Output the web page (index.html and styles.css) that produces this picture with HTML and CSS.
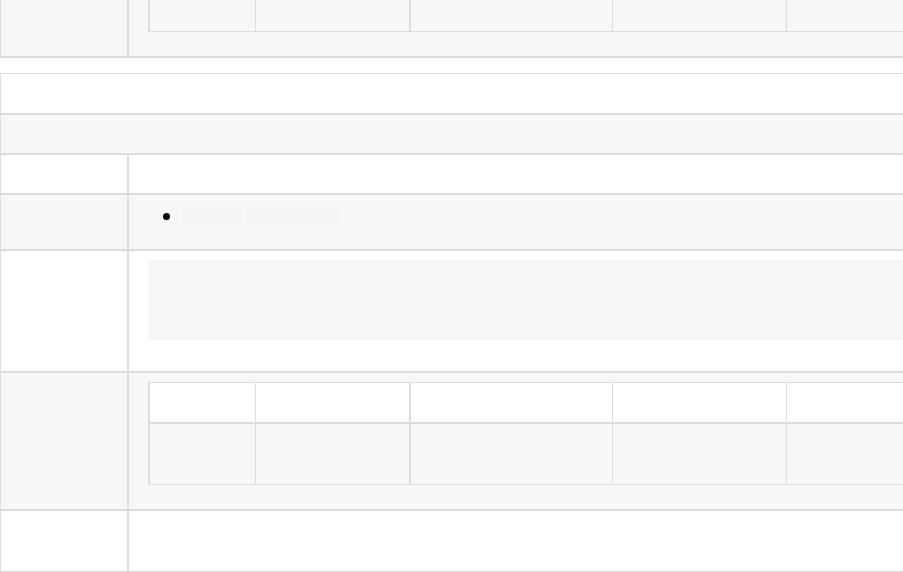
FILE: index.html
```html
<!DOCTYPE html>
<html lang="en">
<head>
<meta charset="utf-8">
<title>Table</title>
<link rel="stylesheet" href="styles.css">
</head>
<body>
<div class="page">
  <div class="tbl tbl-top">
    <div class="cell key last-row alt"></div>
    <div class="cell val last-row alt nested">
      <div class="inner">
        <div class="icell ic1 tail"></div>
        <div class="icell ic2 tail"></div>
        <div class="icell ic3 tail"></div>
        <div class="icell ic4 tail"></div>
        <div class="icell ic5 tail"></div>
      </div>
    </div>
  </div>

  <div class="tbl tbl-main">
    <div class="cell span r1"></div>
    <div class="cell span r2 alt"></div>

    <div class="cell key r3"></div>
    <div class="cell val r3"></div>

    <div class="cell key r4 alt"></div>
    <div class="cell val r4 alt">
      <ul class="list">
        <li class="item"><span class="bullet"></span><code class="code c-a"></code><code class="code c-b"></code></li>
      </ul>
    </div>

    <div class="cell key r5"></div>
    <div class="cell val r5 nested">
      <pre class="block"></pre>
    </div>

    <div class="cell key r6 alt"></div>
    <div class="cell val r6 alt nested">
      <div class="inner">
        <div class="icell ic1 head"></div>
        <div class="icell ic2 head"></div>
        <div class="icell ic3 head"></div>
        <div class="icell ic4 head"></div>
        <div class="icell ic5 head"></div>
        <div class="icell ic1 body"></div>
        <div class="icell ic2 body"></div>
        <div class="icell ic3 body"></div>
        <div class="icell ic4 body"></div>
        <div class="icell ic5 body"></div>
      </div>
    </div>

    <div class="cell key r7"></div>
    <div class="cell val r7"></div>
  </div>
</div>
</body>
</html>
```

FILE: styles.css
```css
html, body {
  margin: 0;
  padding: 0;
  overflow: hidden;
  background: #ffffff;
  font-family: "Liberation Sans", Arial, sans-serif;
  font-size: 14px;
  color: #333333;
}

.page {
  width: 903px;
  height: 572px;
  overflow: hidden;
}

.tbl {
  display: grid;
  grid-template-columns: 128px 1000px;
  width: 1128px;
}

.tbl-main {
  margin-top: 15px;
}

.cell {
  box-sizing: border-box;
  border: 1px solid #dddddd;
  background: #ffffff;
}

.alt {
  background: #f7f7f7;
}

.span {
  grid-column: 1 / -1;
}

/* top table: only its last row is visible */
.tbl-top .cell {
  border-top: 0;
  border-bottom-width: 2px;
  height: 58px;
}

.tbl-top .val {
  padding: 0 0 24px 19px;
}

/* main table row heights */
.r1 { height: 41px; }
.r2 { height: 40px; }
.r3 { height: 40px; }
.r4 { height: 56px; }
.r5 { height: 122px; }
.r6 { height: 138px; }
.r7 { height: 62px; }

.r5.val {
  padding: 9px 0 0 19px;
}

.r6.val {
  padding: 9px 0 0 19px;
}

/* nested table */
.inner {
  display: grid;
  grid-template-columns: 107px 154px 203px 174px 300px;
}

.icell {
  box-sizing: border-box;
  border-left: 1px solid #dddddd;
  border-top: 1px solid #dddddd;
  border-bottom: 1px solid #dddddd;
}

.ic1 { border-left-width: 2px; }
.ic3 { border-left-width: 2px; }
.ic5 { border-right: 1px solid #dddddd; }

.icell.tail {
  border-top: 0;
  height: 32px;
  background: #f7f7f7;
}

.icell.head {
  height: 41px;
  background: #ffffff;
}

.icell.body {
  height: 62px;
  background: #f7f7f7;
}

/* list with code spans */
.list {
  list-style: none;
  margin: 0;
  padding: 11px 0 0 34px;
}

.item {
  display: flex;
  align-items: center;
}

.bullet {
  width: 7px;
  height: 7px;
  border-radius: 50%;
  background: #000000;
  margin-right: 13px;
}

.code {
  display: block;
  height: 21px;
  background: #f5f5f5;
  border-radius: 2px;
}

.c-a { width: 59px; margin-right: 4px; }
.c-b { width: 94px; }

/* pre block */
.block {
  margin: 0;
  height: 80px;
  width: 1000px;
  background: #f6f6f6;
}
```
